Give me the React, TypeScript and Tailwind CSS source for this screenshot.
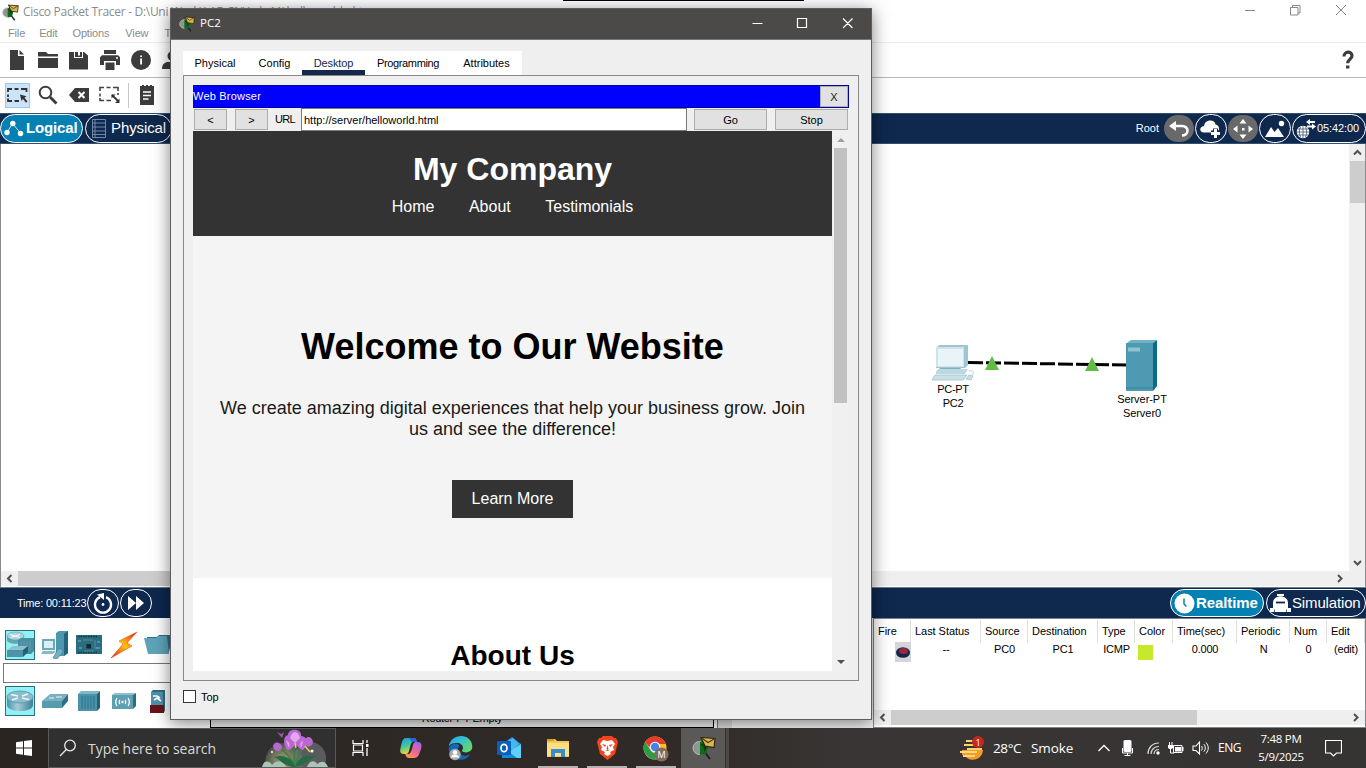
import React from "react";

const UI = "font-['Liberation_Sans',Arial,sans-serif]";
const SEG = "font-['Open_Sans','Noto_Sans',sans-serif]";

function PacketLogo({ size = 18 }: { size?: number }) {
  return (
    <svg width={size} height={size} viewBox="0 0 24 24" className="shrink-0">
      <path d="M12 15l6 8" stroke="#222" strokeWidth="2" />
      <circle cx="7.500" cy="12" r="6.500" fill="#8f958f" stroke="#b9bdb9" strokeWidth="1" />
      <path d="M8 6l5-2 3 7-2 7-6 1z" fill="#0c6a1a" />
      <path d="M9 8l3 2 1 5M12 7l2 6" stroke="#063d0c" strokeWidth="1.300" fill="none" />
      <path d="M9 1.500l14 1-1 9-9-1.500z" fill="#dcb552" stroke="#2b2208" strokeWidth="1.100" />
      <path d="M9 1.500l7 5 7-4" fill="none" stroke="#4a3a10" strokeWidth="1.100" />
    </svg>
  );
}

function Chevron({ dir, color = "#505050" }: { dir: "l" | "r" | "u" | "d"; color?: string }) {
  const d = { l: "M7.5 2L4 5.5L7.5 9", r: "M4 2L7.5 5.5L4 9", u: "M2 7.5L5.5 4L9 7.5", d: "M2 4L5.5 7.5L9 4" }[dir];
  return (
    <svg width="11" height="11" viewBox="0 0 11 11" className="shrink-0">
      <path d={d} fill="none" stroke={color} strokeWidth="2" />
    </svg>
  );
}

function ToolCell({ children }: { children: React.ReactNode }) {
  return <div className="flex h-full w-[31px] shrink-0 items-center justify-center">{children}</div>;
}

function Toolbars() {
  return (
    <>
      <div className="flex h-[35px] shrink-0 items-center border-b border-[#b9b9b9] pl-[1px]">
        <ToolCell>
          <svg width="16" height="20" viewBox="0 0 16 20"><path d="M1 0h8v6h6v14H1z" fill="#3c3c3c" /><path d="M10.500 0L15 4.500h-4.500z" fill="#3c3c3c" /></svg>
        </ToolCell>
        <ToolCell>
          <svg width="20" height="16" viewBox="0 0 20 16"><path d="M0 0h8l2 2h10v2.500H0z" fill="#3c3c3c" /><path d="M0 6h20v10H0z" fill="#3c3c3c" /></svg>
        </ToolCell>
        <ToolCell>
          <svg width="19" height="19" viewBox="0 0 19 19"><path d="M0 1h5v6h9V1h1l4 3.500v14H0z" fill="#3c3c3c" /><path d="M6 1h3v3.500h2V1h2v5H6z" fill="#3c3c3c" /></svg>
        </ToolCell>
        <ToolCell>
          <svg width="20" height="20" viewBox="0 0 20 20"><path d="M4 0h12v4H4zM2 5.200h16l2 2V15h-4v-4H4v4H0V7.200zM5.500 12.500h9V20h-9z" fill="#3c3c3c" /><circle cx="17" cy="8" r="1" fill="#fff" /></svg>
        </ToolCell>
        <ToolCell>
          <svg width="20" height="20" viewBox="0 0 20 20"><circle cx="10" cy="10" r="10" fill="#3c3c3c" /><path d="M9.200 5.500H11v1.600H9.200zM9.200 8.500H11v6H9.200z" fill="#fff" /></svg>
        </ToolCell>
        <ToolCell>
          <svg width="20" height="18" viewBox="0 0 20 18"><circle cx="10" cy="5" r="4.500" fill="#3c3c3c" /><path d="M0 18c0-5 3-7 6-7h8c3 0 6 2 6 7z" fill="#3c3c3c" /></svg>
        </ToolCell>
        <div className="flex-1" />
        <div className="flex w-[36px] justify-center">
          <svg width="12" height="20" viewBox="0 0 12 20"><path d="M2 6.500C2 0.800 10 1 10 5.800c0 3.200-4.300 3.600-4.300 7.500" fill="none" stroke="#3c3c3c" strokeWidth="3.200" /><rect x="4" y="15.500" width="3.400" height="3" fill="#3c3c3c" /></svg>
        </div>
      </div>
      <div className="flex h-[35px] shrink-0 items-center pb-px pl-[1px]">
        <ToolCell>
          <div className="ml-[2px] flex h-[25px] w-[25px] items-center justify-center border border-[#99c9ef] bg-[#cce4f7]">
            <svg width="21" height="17" viewBox="0 0 21 17"><path d="M1 5V2h4M7.500 2h4M14 2h5.500v3M1 7.500v2.500M1 11.500V14h4M7.500 14H12" fill="none" stroke="#333" strokeWidth="1.800" /><path d="M13 7.500l6.500 1.700-2 1.500 3 3.700-1.500 1.300-3-3.700-1.500 2z" fill="#333" /></svg>
          </div>
        </ToolCell>
        <ToolCell>
          <svg width="20" height="20" viewBox="0 0 20 20"><circle cx="7.500" cy="7.500" r="5.800" fill="none" stroke="#3c3c3c" strokeWidth="2" /><path d="M12 12l6.500 6.500" stroke="#3c3c3c" strokeWidth="2.800" /></svg>
        </ToolCell>
        <ToolCell>
          <svg width="20" height="14" viewBox="0 0 20 14"><path d="M6 0h14v14H6L0 7z" fill="#3c3c3c" /><path d="M9.500 4l6 6M15.500 4l-6 6" stroke="#fff" strokeWidth="2" /></svg>
        </ToolCell>
        <ToolCell>
          <svg width="21" height="18" viewBox="0 0 21 18"><path d="M1 5V1.500h4M7.500 1.500h4M14 1.500h5V5M1 7.500v3M1 12v2.500h4M7.500 14.500H12M19 7v2" fill="none" stroke="#444" strokeWidth="1.600" /><path d="M13 9l6.500 6.500" stroke="#333" strokeWidth="1.800" /><path d="M12.500 8.500h4l-4 4zM20.500 17h-4.500l4.500-4.500z" fill="#333" /></svg>
        </ToolCell>
        <div className="ml-[3px] h-[25px] w-px bg-[#c8c8c8]" />
        <div className="ml-[11px]">
          <svg width="14" height="20" viewBox="0 0 14 20"><path d="M0 1h2V0h2v1h2V0h2v1h2V0h2v1h2v19H0z" fill="#3c3c3c" /><path d="M3 7h8M3 10.500h8M3 14h5.500" stroke="#fff" strokeWidth="1.400" /></svg>
        </div>
      </div>
    </>
  );
}

function NavBar() {
  return (
    <div className="flex h-[31px] shrink-0 items-center border-t border-b border-[#34506f] bg-[#0e284e]">
      <div className="flex h-[29px] w-[83px] shrink-0 items-center rounded-full border border-white bg-[#0480b2] pl-[3px] text-white">
        <svg width="20" height="17" viewBox="0 0 20 17"><path d="M3 12.500L8.500 3.500L16.500 13" fill="none" stroke="#cfe8f2" strokeWidth="1" /><circle cx="3" cy="12.500" r="2.700" fill="#fff" /><circle cx="8.800" cy="3.500" r="2.700" fill="#fff" /><circle cx="16.500" cy="13.500" r="2.700" fill="#fff" /></svg>
        <span className="ml-[2px] text-[15px] font-bold tracking-[-0.15px]">Logical</span>
      </div>
      <div className="ml-[2px] flex h-[29px] w-[87px] shrink-0 items-center rounded-full border border-white pl-[6px] text-white">
        <svg width="14" height="19" viewBox="0 0 14 19"><path d="M.5.500h13v18H.5zM.5 4h13M.5 8h13M.5 12h13M.5 15.500h13M3 .5v18" fill="none" stroke="#7088a6" strokeWidth="1" /></svg>
        <span className="ml-[5px] text-[15px] tracking-[-0.1px]">Physical</span>
      </div>
      <div className="flex-1" />
      <span className="mr-[5px] text-[11px] text-white">Root</span>
      <div className="flex items-center gap-px">
        <div className="flex h-[27px] w-[30px] items-center justify-center rounded-full bg-[#696969]">
          <svg width="22" height="18" viewBox="0 0 22 18"><path d="M8 1L1 6l7 5" fill="#fff" /><path d="M6 6h8c7.500 0 7 9.500 0 9.500" fill="none" stroke="#fff" strokeWidth="2.600" /></svg>
        </div>
        <div className="flex h-[29px] w-[32px] items-center justify-center rounded-full border border-white">
          <svg width="22" height="20" viewBox="0 0 22 20"><path d="M4 13.500c-5 0-5-6 0-6.500C5 0 15 0 15.500 5.500c4 .5 5 6 1 8z" fill="#fff" /><path d="M15.500 9.500v9M11 14h9" stroke="#0e284e" strokeWidth="5" /><path d="M15.500 10v9M11 14.500h9" stroke="#fff" strokeWidth="3" /></svg>
        </div>
        <div className="flex h-[27px] w-[30px] items-center justify-center rounded-full bg-[#696969]">
          <svg width="20" height="20" viewBox="0 0 20 20"><path d="M10 0l3.500 4.500h-7zM10 20l3.500-4.500h-7zM0 10l4.500-3.500v7zM20 10l-4.500-3.500v7zM9 9h2.500v2.500H9z" fill="#fff" /></svg>
        </div>
        <div className="flex h-[29px] w-[32px] items-center justify-center rounded-full border border-white">
          <svg width="20" height="18" viewBox="0 0 20 18"><path d="M0 17L6 7l3.500 5L13 8l6 9z" fill="#fff" /><circle cx="16.500" cy="3.500" r="2.700" fill="#fff" /></svg>
        </div>
        <div className="flex h-[29px] w-[74px] items-center rounded-full border border-white pl-[3px] text-[11px] text-white">
          <svg width="21" height="20" viewBox="0 0 21 20"><circle cx="7" cy="13" r="6.200" fill="#fff" /><path d="M1 13h12M7 7v12M2 10h10M2 16h10M4.500 8c-1.500 3-1.500 7 0 10M9.500 8c1.500 3 1.500 7 0 10" fill="none" stroke="#0e284e" strokeWidth=".6" /><path d="M12 3h7M11 7.500h7" stroke="#fff" strokeWidth="2" /><path d="M10 3l4-3v6zM20 7.500l-4-3v6z" fill="#fff" /></svg>
          <span className="tracking-[-0.1px]">05:42:00</span>
        </div>
      </div>
    </div>
  );
}

function Workspace() {
  return (
    <div className="flex h-[443px] shrink-0 flex-col border-x border-[#8a8a8a] bg-white">
      <div className="flex h-[427px]">
        <div className="relative flex-1">
          <svg width="270" height="100" viewBox="0 0 270 100" className="absolute left-[914px] top-[181px]">
            <path d="M53 37.500L212 40" stroke="#000" strokeWidth="3" strokeDasharray="15 3" />
            <path d="M77 31l7 14H70zM177 32l7 14h-14z" fill="#63ba47" />
            <path d="M212 18l4-3h26l-4 3z" fill="#6fb2c4" />
            <path d="M238 18l4-3v46l-4 5z" fill="#0b6c85" />
            <path d="M211 18h27v48h-27z" fill="#4e9ab2" />
            <path d="M211 63h27" stroke="#35809a" strokeWidth="1" />
            <path d="M213 22.500h12v4h-12z" fill="#8fc3d0" />
            <path d="M21 23l3-3h29v20l-3 3H21z" fill="#9ec5d0" />
            <path d="M21 22h28v20H21z" fill="#cfe3e9" />
            <rect x="23" y="24" width="25" height="17" fill="#eaf3f8" />
            <path d="M25 43h20l6 4H21z" fill="#7fb1c0" />
            <path d="M21 47l3-3h29l-3 5H21z" fill="#bcd9e2" />
            <path d="M20 50h32l-4 5H17z" fill="#c9e0e7" stroke="#9dc2cf" strokeWidth=".8" />
            <path d="M51 54l3-4 4 1-2 4z" fill="#c9e0e7" stroke="#9dc2cf" strokeWidth=".8" />
            <path d="M54 46c4-1 6 1 3 4" fill="none" stroke="#b5c6cc" strokeWidth=".8" />
          </svg>
          <div className="absolute left-[912px] top-[238px] w-[80px] text-center text-[11px] leading-[14px] tracking-[-0.3px]">PC-PT<br />PC2</div>
          <div className="absolute left-[1101px] top-[248px] w-[80px] text-center text-[11px] leading-[14px] tracking-[-0.05px]">Server-PT<br />Server0</div>
        </div>
        <div className="flex w-[16px] flex-col items-center bg-[#efefef]">
          <div className="flex h-[17px] items-center"><Chevron dir="u" /></div>
          <div className="h-[42px] w-[15px] bg-[#cdcdcd]" />
          <div className="flex-1" />
          <div className="flex h-[17px] items-center"><Chevron dir="d" /></div>
        </div>
      </div>
      <div className="flex h-[15px] items-center bg-[#efefef]">
        <div className="flex w-[17px] justify-center"><Chevron dir="l" /></div>
        <div className="h-full w-[640px] bg-[#cdcdcd]" />
        <div className="flex-1" />
        <div className="mr-[20px]"><Chevron dir="r" /></div>
      </div>
    </div>
  );
}

function TimeBar() {
  return (
    <div className="flex h-[31px] shrink-0 items-center border-t border-[#6c7a8c] bg-[#0e284e] text-white">
      <span className="ml-[17px] w-[70px] whitespace-nowrap text-[11px] tracking-[-0.2px]">Time: 00:11:23</span>
      <div className="flex h-[28px] w-[32px] items-center justify-center rounded-full border border-white">
        <svg width="20" height="22" viewBox="0 0 20 22"><path d="M7 5.200a8 8 0 1 0 6 0" fill="none" stroke="#fff" strokeWidth="2.400" /><path d="M4 2.500L11 1v7z" fill="#fff" /><circle cx="10" cy="12.500" r="1.400" fill="#fff" /></svg>
      </div>
      <div className="ml-px flex h-[28px] w-[32px] items-center justify-center rounded-full border border-white">
        <svg width="18" height="14" viewBox="0 0 18 14"><path d="M1 0l8 7-8 7zM9 0l8 7-8 7z" fill="#fff" /></svg>
      </div>
      <div className="flex-1" />
      <div className="flex h-[28px] w-[94px] items-center rounded-full border border-white bg-[#0480b2] pl-[3px]">
        <svg width="21" height="21" viewBox="0 0 21 21"><circle cx="10.500" cy="10.500" r="10" fill="#fff" /><path d="M10 5.500V11l2.500 2.500" fill="none" stroke="#0480b2" strokeWidth="1.500" /></svg>
        <span className="ml-px text-[15px] font-bold tracking-[-0.1px]">Realtime</span>
      </div>
      <div className="ml-[2px] flex h-[28px] w-[100px] items-center rounded-full border border-white pl-[3px]">
        <svg width="21" height="18" viewBox="0 0 21 18"><path d="M7 0h7v2h-7zM3 9c0-9 15-9 15 0v3H3zM0 14h21v4H0zM3 12h15v3H3z" fill="#fff" /><path d="M6 8.500h9" stroke="#0e284e" strokeWidth="1.800" /><path d="M4.500 15.500v2.500M16.500 15.500v2.500" stroke="#0e284e" strokeWidth=".7" /></svg>
        <span className="ml-[1px] text-[15px] tracking-[-0.15px]">Simulation</span>
      </div>
    </div>
  );
}

function RouterIcon() {
  return (
    <svg width="28" height="22" viewBox="0 0 28 22"><defs><linearGradient id="rt"><stop stopColor="#4f93a9" /><stop offset=".4" stopColor="#a5cdd8" /><stop offset="1" stopColor="#3c8097" /></linearGradient></defs><path d="M1 7v8c0 8 26 8 26 0V7z" fill="url(#rt)" /><ellipse cx="14" cy="7" rx="13" ry="6" fill="#8dbccc" stroke="#4f90a6" strokeWidth=".7" /><path d="M5 4.500l7 1.500M16 8l7 1.500M22 4l-6 2M12 8l-6 2" stroke="#eafafd" strokeWidth="1.400" /></svg>
  );
}

function SwitchIcon() {
  return (
    <svg width="28" height="16" viewBox="0 0 28 16"><path d="M1 8L9 1h18l-6 7z" fill="#79b1c2" /><path d="M1 8h20v7H1z" fill="#579bb0" /><path d="M21 8l6-7v7l-6 7z" fill="#2b6f85" /><path d="M8 5h5M15 4h6" stroke="#e8f6fa" strokeWidth="1.200" /></svg>
  );
}

function DeviceCell({ children }: { children: React.ReactNode }) {
  return <div className="flex h-[30px] w-[30px] shrink-0 items-center justify-center">{children}</div>;
}

function DevicePanel() {
  return (
    <div className="flex w-[210px] shrink-0 flex-col pl-[3px]">
      <div className="mt-[12px] flex gap-[4.500px] pl-[2px]">
        <div className="flex h-[30px] w-[30px] items-center justify-center border border-[#2c6d7e] bg-[#8ff3f6]">
          <svg width="28" height="28" viewBox="0 0 28 28"><path d="M1 5v4c0 5 17 5 17 0V5z" fill="#67a4b5" /><ellipse cx="9.500" cy="5" rx="8.500" ry="4" fill="#a9d2dc" stroke="#5796a9" strokeWidth=".5" /><path d="M4 3.500l10 3M14 3.500L5 6.500" stroke="#fff" /><path d="M12 9l3-2h13v13l-3 3H12z" fill="#4a8ca2" /><path d="M15 10v12M18 10v12M21 10v12M24 10v10" stroke="#5f9fb2" /><path d="M1 19l6-4h15l-5 4z" fill="#8ec1cf" /><path d="M1 19h16v7H1z" fill="#4f93a9" /><path d="M17 19l5-4v6l-5 5z" fill="#256176" /></svg>
        </div>
        <DeviceCell>
          <svg width="28" height="28" viewBox="0 0 28 28"><path d="M15 2l3-2h9v22l-4 3h-8z" fill="#4d97ae" /><path d="M23 3l4-3v22l-4 3z" fill="#22647b" /><path d="M1 8h13v11H1z" fill="#6aa9bb" /><path d="M3 10h9v7H3z" fill="#d9eef5" /><path d="M2 20h13l-3 3H0z" fill="#86b8c6" /><path d="M12 27l5-9h4l1 3-6 7z" fill="#74b0c1" stroke="#3e869d" strokeWidth=".7" /></svg>
        </DeviceCell>
        <DeviceCell>
          <svg width="26" height="20" viewBox="0 0 26 20"><path d="M0 0h26v19H0z" fill="#2b6d80" /><path d="M10.500 9h4.500v4.500h-4.500z" fill="#17252c" /><path d="M2 1.500h20M2 17.500h19" stroke="#133844" strokeWidth="1.500" strokeDasharray="1.500 1" /><path d="M2 5h3v2H2zM3 12h3v2H3zM21 6h3v2h-3zM20 12h4v2h-4z" fill="#4b95a5" /><path d="M7 5h10M8 16h10M19 5v9" fill="none" stroke="#6aa6ac" strokeWidth=".6" /></svg>
        </DeviceCell>
        <DeviceCell>
          <svg width="28" height="28" viewBox="0 0 28 28"><defs><linearGradient id="bolt" x1="1" y1="0" x2="0" y2="1"><stop offset="0" stopColor="#e31a08" /><stop offset=".5" stopColor="#ffc215" /><stop offset="1" stopColor="#dd1c10" /></linearGradient></defs><path d="M27 1L9 10l4 3L1 27l21-12-5-3z" fill="url(#bolt)" stroke="#e2400c" strokeWidth=".5" /></svg>
        </DeviceCell>
        <DeviceCell>
          <svg width="28" height="22" viewBox="0 0 28 22"><path d="M3 3h10l2-2h11l2 3-3 14H5z" fill="#2b7188" /><path d="M0 4h12l2-2h9l2 18H4z" fill="#5ea4b8" /></svg>
        </DeviceCell>
      </div>
      <div className="mt-[3px] h-[20px] border border-[#777] bg-white" />
      <div className="mt-[3px] flex gap-[4.500px] pl-[2px]">
        <div className="flex h-[30px] w-[30px] items-center justify-center border border-[#2c6d7e] bg-[#8ff3f6]"><RouterIcon /></div>
        <DeviceCell><SwitchIcon /></DeviceCell>
        <DeviceCell>
          <svg width="24" height="22" viewBox="0 0 24 22"><path d="M1 4l3-3h19l-3 3z" fill="#80b7c5" /><path d="M1 4h19v17H1z" fill="#4b91a8" /><path d="M20 4l3-3v17l-3 3z" fill="#235f75" /><path d="M5 6v13M8 6v13M11 6v13M14 6v13M17 6v13" stroke="#2d758c" /></svg>
        </DeviceCell>
        <DeviceCell>
          <svg width="26" height="18" viewBox="0 0 26 18"><path d="M1 3l3-2h21l-3 2z" fill="#8cc0cd" /><path d="M1 3h21v14H1z" fill="#5d9fb3" /><path d="M22 3l3-2v13l-3 3z" fill="#2c6b81" /><path d="M6 6c-2 3-2 5 0 8M9 8c-1 1-1 3 0 4M17 6c2 3 2 5 0 8M14 8c1 1 1 3 0 4" fill="none" stroke="#fff" strokeWidth="1.300" /><circle cx="11.500" cy="10" r="1.200" fill="#fff" /></svg>
        </DeviceCell>
        <DeviceCell>
          <svg width="16" height="25" viewBox="0 0 16 25"><path d="M1 3l2-2h12v21l-2 2H1z" fill="#2d6d83" /><path d="M1 3h12v13H1z" fill="#4f93a9" /><path d="M0 16h14v8H0z" fill="#681418" /><path d="M3 7h4l3 2M4 11l3-2 4 3" stroke="#fff" strokeWidth="1.600" fill="none" /></svg>
        </DeviceCell>
      </div>
    </div>
  );
}

const columns: { head: string; value: string }[] = [
  { head: "Fire", value: "" },
  { head: "Last Status", value: "--" },
  { head: "Source", value: "PC0" },
  { head: "Destination", value: "PC1" },
  { head: "Type", value: "ICMP" },
  { head: "Color", value: "" },
  { head: "Time(sec)", value: "0.000" },
  { head: "Periodic", value: "N" },
  { head: "Num", value: "0" },
  { head: "Edit", value: "(edit)" },
];

function EventTable() {
  return (
    <div className="flex w-[493px] shrink-0 flex-col border border-[#7f8489] bg-white pt-px text-[11px]">
      <div className="grid h-[22px] grid-cols-[37px_70px_47px_70px_37px_38px_64px_53px_37px_38px]">
        {columns.map((c) => (
          <div key={c.head} className="whitespace-nowrap border-r border-[#e0e0e0] pl-[4px] leading-[23px] tracking-[-0.05px]">{c.head}</div>
        ))}
      </div>
      <div className="grid h-[20px] grid-cols-[37px_70px_47px_70px_37px_38px_64px_53px_37px_38px]">
        {columns.map((c) => (
          <div key={c.head} className="whitespace-nowrap text-center leading-[14px] tracking-[-0.2px]">
            {c.head === "Fire" && (
              <div className="flex h-[20px] justify-end">
                <div className="flex w-[16px] items-center justify-center bg-[#d3d5d9]">
                  <svg width="14" height="11" viewBox="0 0 14 11"><ellipse cx="7" cy="5.500" rx="7" ry="5.300" fill="#14254a" /><ellipse cx="7.500" cy="4" rx="4.500" ry="3" fill="#a4243f" /></svg>
                </div>
              </div>
            )}
            {c.head === "Color" && <div className="ml-[3px] mt-[3px] h-[15px] w-[15px] bg-[#c6e92b]" />}
            {c.value}
          </div>
        ))}
      </div>
      <div className="flex-1" />
      <div className="mb-[2px] flex h-[15px] items-center bg-[#efefef]">
        <div className="flex w-[17px] justify-center"><Chevron dir="l" /></div>
        <div className="h-full w-[306px] bg-[#cdcdcd]" />
        <div className="flex-1" />
        <div className="mr-[4px]"><Chevron dir="r" /></div>
      </div>
    </div>
  );
}

function CompanySite() {
  return (
    <div className="w-[639px] overflow-hidden bg-white">
      <div className="flex h-[105px] flex-col items-center bg-[#333] text-white">
        <div className="mt-[20px] text-[32px] font-bold leading-[37px]">My Company</div>
        <div className="mt-[9px] flex gap-[34.500px] text-[16px] leading-[19px]">
          <span>Home</span><span>About</span><span>Testimonials</span>
        </div>
      </div>
      <div className="flex h-[342px] flex-col items-center bg-[#f4f4f4]">
        <div className="mt-[90px] whitespace-nowrap text-[36px] font-bold leading-[42px] text-black">Welcome to Our Website</div>
        <div className="mt-[30px] whitespace-nowrap text-center text-[18px] leading-[21px] text-[#1a1a1a]">
          We create amazing digital experiences that help your business grow. Join<br />us and see the difference!
        </div>
        <div className="mt-[40px] flex h-[38px] w-[121px] items-center justify-center bg-[#333] pb-px text-[16px] text-white">Learn More</div>
      </div>
      <div className="pt-[61px] text-center text-[28px] font-bold leading-[34px] text-black">About Us</div>
    </div>
  );
}

function Dialog() {
  return (
    <div className="absolute left-[170px] top-[8px] flex h-[712px] w-[702px] flex-col border border-[#5d5d61] bg-[#efefef] shadow-[0_3px_16px_rgba(0,0,0,0.5)]">
      <div className={`${SEG} flex h-[31px] shrink-0 items-center border-b border-[#777] bg-[#4c4a48] text-white`}>
        <div className="ml-[8px]"><PacketLogo size={16} /></div>
        <span className="ml-[5px] pb-[2px] text-[11.5px]">PC2</span>
        <div className="flex-1" />
        <svg width="106" height="12" viewBox="0 0 106 12" className="mb-[2px] mr-[15px]"><path d="M2.500 6.500h10M47.500 1.500h9v9h-9zM93 1.500l9.500 9.500M102.500 1.500L93 11" fill="none" stroke="#fff" strokeWidth="1.200" /></svg>
      </div>
      <div className="flex flex-1 flex-col px-[12px] pt-[11px]">
        <div className="flex h-[24px] w-[339px] bg-white text-[11px] leading-[24px]">
          <div className="w-[64px] text-center">Physical</div>
          <div className="w-[55px] text-center">Config</div>
          <div className="w-[63px] border-b-[5px] border-[#14284b] text-center tracking-[-0.1px] text-[#14284b]">Desktop</div>
          <div className="w-[86px] text-center tracking-[-0.35px]">Programming</div>
          <div className="w-[71px] text-center">Attributes</div>
        </div>
        <div className="flex h-[606px] w-[676px] flex-col border border-[#85888c] pl-[9px] pt-[9px]">
          <div className="flex h-[23px] w-[656px] items-center justify-between border border-l-0 border-[#0000a8] bg-[#00f] text-[11px] text-white">
            <span className="tracking-[0.2px]">Web Browser</span>
            <span className="flex h-[21px] w-[28px] items-center justify-center border border-[#adadad] bg-[#e1e1e1] pt-px text-[#222]">X</span>
          </div>
          <div className="flex h-[23px] w-[656px] items-center text-[11px]">
            <span className="ml-px flex h-[21px] w-[33px] items-center justify-center border border-[#adadad] bg-[#e1e1e1] pt-px">&lt;</span>
            <span className="ml-[8px] flex h-[21px] w-[33px] items-center justify-center border border-[#adadad] bg-[#e1e1e1] pt-px">&gt;</span>
            <span className="ml-[7px] w-[26px] tracking-[-0.7px]">URL</span>
            <span className="flex h-[23px] w-[386px] items-center border border-[#7a7a7a] bg-white pl-[2px] pt-px">http://server/helloworld.html</span>
            <span className="ml-[7px] flex h-[21px] w-[73px] items-center justify-center border border-[#adadad] bg-[#e1e1e1] pt-px">Go</span>
            <span className="ml-[8px] flex h-[21px] w-[73px] items-center justify-center border border-[#adadad] bg-[#e1e1e1] pt-px">Stop</span>
          </div>
          <div className="flex h-[540px]">
            <CompanySite />
            <div className="flex w-[17px] flex-col items-center bg-[#f0f0f0]">
              <svg width="8" height="4" viewBox="0 0 8 4" className="my-[6.500px]"><path d="M4 0l4 4H0z" fill="#a0a0a0" /></svg>
              <div className="h-[255px] w-[13px] bg-[#c1c1c1]" />
              <div className="flex-1" />
              <svg width="8" height="4" viewBox="0 0 8 4" className="mb-[7px]"><path d="M4 4l4-4H0z" fill="#505050" /></svg>
            </div>
          </div>
        </div>
        <div className="mt-[9px] flex h-[13px] items-center gap-[5px] text-[11px]">
          <div className="h-[13px] w-[13px] border border-[#333] bg-white" />
          <span className="pt-[2px] leading-[13px]">Top</span>
        </div>
      </div>
    </div>
  );
}

function Flowers() {
  return (
    <svg width="72" height="38" viewBox="0 0 72 38" className="shrink-0">
      <defs><radialGradient id="globe"><stop offset="0" stopColor="#cdbd90" /><stop offset=".7" stopColor="#76805f" /><stop offset="1" stopColor="#50565a" /></radialGradient></defs>
      <circle cx="25" cy="33" r="19" fill="url(#globe)" opacity=".8" />
      <circle cx="51" cy="29" r="16" fill="#74787b" opacity=".6" />
      <path d="M3 38c2-8 8-6 10-2 6-7 12-2 14 2zM48 38c3-8 9-6 10-3 6-4 9-2 11 3z" fill="#a9c5b8" />
      <path d="M35 38C36 25 35 20 35 12M36 36C27 22 24 22 20 18M37 37c2-16 8-19 12-22" stroke="#407e48" strokeWidth="1.800" fill="none" />
      <path d="M15 28c10-3 18 1 21 10-10 0-14-7-21-10zM36 38c3-9 9-12 21-11-7 3-12 10-21 11z" fill="#246b46" />
      <path d="M29 6c0-7 14-7 13 1 9 1 6 10 2 14-4-1-5-4-8-5-3 3-4 5-8 5-4-6-4-14 1-15z" fill="#bd67d7" />
      <path d="M31 9c2-8 8-8 10 0l-5 5zM27 12c3 0 4 3 3 7M44 12c-3 1-3 4-2 7" fill="#e2a8ee" />
      <path d="M14 17c2-6 8-3 9 1-1 6-8 5-9-1zM45 12c3-7 9-4 9 2-2 5-7 5-9-2z" fill="#b769cd" />
      <path d="M18 3l4 2 3-2-2 6z" fill="#9b5aa8" />
      <path d="M36 14l1 5M46 17l5 6" stroke="#f3c94a" strokeWidth="1.500" />
      <circle cx="53" cy="22" r="1.500" fill="#fff" /><circle cx="13" cy="23" r="1.200" fill="#e5c8ed" />
    </svg>
  );
}

function AppSlot({ children, open }: { children: React.ReactNode; open?: boolean }) {
  return (
    <div className="flex h-full w-[49px] shrink-0 flex-col items-center">
      <div className="flex h-[38px] items-center">{children}</div>
      {open && <div className="h-[2px] w-[40px] bg-[#b9b1b0]" />}
    </div>
  );
}

function Taskbar() {
  return (
    <div className={`${SEG} flex h-[40px] shrink-0 items-center bg-[linear-gradient(90deg,#2a2521,#302b28_50%,#383534_62%,#363433)] text-white`}>
      <div className="flex w-[48px] justify-center">
        <svg width="16" height="16" viewBox="0 0 16 16"><path d="M0 2.200L7 1.300V7.600H0zM8 1.100L16 0v7.600H8zM0 8.500h7v6.200L0 13.800zM8 8.500h8V16L8 14.900z" fill="#fff" /></svg>
      </div>
      <div className="flex h-[40px] w-[288px] shrink-0 items-center border border-[#5b5858] bg-[#313030]">
        <svg width="18" height="18" viewBox="0 0 18 18" className="ml-[10px]"><circle cx="11" cy="6.500" r="5.300" fill="none" stroke="#e8e8e8" strokeWidth="1.300" /><path d="M7.300 10.500L1 17" stroke="#e8e8e8" strokeWidth="1.300" /></svg>
        <span className="ml-[11px] w-[171px] whitespace-nowrap text-[14px] tracking-[-0.04px] text-[#dadada]">Type here to search</span>
        <Flowers />
      </div>
      <div className="flex h-[40px] items-center">
        <AppSlot>
          <svg width="17" height="16" viewBox="0 0 17 16" className="mr-px mt-px"><path d="M1 0v3.500h10V0M1 16v-3.500h10V16M1.500 5h9v6h-9z" fill="none" stroke="#fff" strokeWidth="1.200" /><path d="M15 0v3M15 8v8" stroke="#fff" strokeWidth="1.300" /><path d="M14 4h2.500v3H14z" fill="#fff" /></svg>
        </AppSlot>
        <div className="ml-[1.500px] flex h-full">
          <AppSlot>
            <svg width="24" height="22" viewBox="0 0 24 22" className="mt-[2px]"><defs><linearGradient id="cpa" x1="0" y1="0" x2="0.300" y2="1"><stop stopColor="#1b9dea" /><stop offset=".55" stopColor="#3fc7a0" /><stop offset="1" stopColor="#f1d42f" /></linearGradient><linearGradient id="cpb" x1="0.800" y1="0" x2="0.200" y2="1"><stop stopColor="#a067ec" /><stop offset=".5" stopColor="#e9649a" /><stop offset="1" stopColor="#ff9a4c" /></linearGradient></defs><path d="M7 1h8c2 0 2 2 3 4h-4c-2 0-2 2-3 5l-1 4c-1 3-2 3-5 3-5 0-4-4-3-8 1-5 2-8 5-8z" fill="url(#cpa)" /><path d="M18 5c5 0 5 3 4 7-2 6-3 9-7 9H10c-3 0-3-3-4-4h3c2 0 3-2 4-5l1-4c1-3 2-3 4-3z" fill="url(#cpb)" /><path d="M10 1h5c2 0 2 2 3 4h-4c-2 0-2-2-4-4z" fill="#2866d4" /></svg>
          </AppSlot>
          <AppSlot>
            <svg width="25" height="25" viewBox="0 0 25 25" className="mt-[2px]"><defs><linearGradient id="edg" x1="0" y1="0" x2="1" y2=".6"><stop stopColor="#2aa5e0" /><stop offset=".5" stopColor="#37bfd0" /><stop offset="1" stopColor="#63d66a" /></linearGradient></defs><path d="M.8 11C2-3 24-4 24.300 11c0 5-7 7-10.500 4 3-4 0-8-5-8-4 0-7 1-8 4z" fill="url(#edg)" /><path d="M.8 12C3 7 10 6 11.500 10c-2 2-2 5 0 7 3 4 8 3 11 1-4 7-14 8-19 1-2-2-3-4-2.700-7z" fill="#1568b8" /><circle cx="7" cy="18.500" r="5.800" fill="#a6abb0" /><circle cx="7" cy="16.500" r="2.200" fill="#fff" /><path d="M3 21.500c0-4 8-4 8 0z" fill="#fff" /></svg>
          </AppSlot>
          <AppSlot>
            <svg width="25" height="24" viewBox="0 0 25 24" className="mt-[2px]"><path d="M5 8l10-7 9 7v14H5z" fill="#1490df" /><path d="M7 7l9-5 6 6-7 6z" fill="#49b7ee" /><path d="M5 22l11-9 8-5v14z" fill="#5fd0f8" /><path d="M5 11l15 11H5z" fill="#138ad5" /><rect x="0" y="5" width="14" height="14" rx="1" fill="#0760b9" /><ellipse cx="7" cy="12" rx="3" ry="3.700" fill="none" stroke="#fff" strokeWidth="1.700" /></svg>
          </AppSlot>
          <AppSlot open>
            <svg width="22" height="20" viewBox="0 0 22 20" className="mt-[2px]"><path d="M0 1h8l2 2h12v16H0z" fill="#f6c84f" /><path d="M0 1h7v2H0z" fill="#d99d24" /><path d="M0 5h22v13H0z" fill="#ffe084" /><path d="M4 19v-8h14v8h-4v-4H8v4z" fill="#398bd0" /></svg>
          </AppSlot>
          <AppSlot open>
            <svg width="21" height="24" viewBox="0 0 21 24" className="mt-[2px]"><path d="M6 0h9l2 2h2l2 4-3 12-7.500 6L3 18 0 6l2-4h2z" fill="#f4441c" /><path d="M6 4l4.500 1L15 4l3 4-2 3 1 3-4 2 1 2-3.500 2L7 18l1-2-4-2 1-3-2-3z" fill="#fff" /><path d="M5 8l4 1-1 2zM16 8l-4 1 1 2zM10.500 9l1 4-1 1-1-1zM8 15l2.500-1 2.500 1" fill="#f4441c" /></svg>
          </AppSlot>
          <AppSlot open>
            <svg width="26" height="26" viewBox="0 0 26 26" className="mt-[4px]"><circle cx="12" cy="12" r="11.500" fill="#fbc116" /><path d="M2 6C7-2 19-1 23 8H12c-4 0-5 5-2 7L2 6z" fill="#e43c31" /><path d="M2 6C-2 13 3 23 12 23.500l4-7c-4 2-8 0-9-3z" fill="#299a4f" /><circle cx="12" cy="11" r="5.300" fill="#fff" /><circle cx="12" cy="11" r="4.200" fill="#4184ed" /><circle cx="18.500" cy="18.500" r="7" fill="#846a61" /><text x="18.500" y="22" textAnchor="middle" fontSize="9" fill="#fff">M</text></svg>
          </AppSlot>
        </div>
      </div>
      <div className="flex h-[40px] w-[44px] items-center justify-center bg-[#5b5958] pl-[3px]"><PacketLogo size={24} /></div>
      <div className="h-[40px] w-[4px] border-l border-[#343230] bg-[#4b4847]" />
      <div className="flex-1" />
      <svg width="25" height="24" viewBox="0 0 25 24"><path d="M2 14h21c-1 12-16 12-18 5H2z" fill="#f39c27" /><path d="M6 5h9M4 9h11M7 13h15" stroke="#ffd16b" strokeWidth="2" /><path d="M0 16h17M3 20h12" stroke="#ffd783" strokeWidth="2" /><circle cx="18" cy="6" r="6" fill="#c52720" /><text x="18" y="9.500" textAnchor="middle" fontSize="9" fill="#fff">1</text></svg>
      <span className="ml-[8px] w-[38px] whitespace-nowrap text-[13.5px] tracking-[-0.4px]">28°C</span>
      <span className="w-[67px] text-[13.5px] tracking-[-0.1px]">Smoke</span>
      <svg width="12" height="8" viewBox="0 0 12 8"><path d="M.5 7L6 1.500 11.500 7" fill="none" stroke="#fff" strokeWidth="1.300" /></svg>
      <svg width="11" height="16" viewBox="0 0 11 16" className="ml-[12px]"><rect x="1.500" y="0" width="8" height="12" rx="1.500" fill="#fff" /><path d="M.5 8v5h10V8M5.500 13v2M2.500 15.500h6" stroke="#fff" fill="none" strokeWidth="1" /></svg>
      <svg width="13" height="13" viewBox="0 0 13 13" className="ml-[14px]"><path d="M1 12C1 6 5 1 12 1M4 12c0-4 3-7.500 8-7.500M7 12c0-2.500 2-4.500 5-4.500" fill="none" stroke="#d8d8d8" strokeWidth="1.200" /><circle cx="11" cy="11" r="1.700" fill="#fff" /></svg>
      <svg width="16" height="13" viewBox="0 0 16 13" className="ml-[8px]"><path d="M5.500 3.500h8.500v7H5.500z" fill="none" stroke="#fff" strokeWidth="1" /><path d="M7 5h6v4.500H7zM14 5h1.500v4H14zM0 3h5v3l-1.500 1h-2L0 6zM1 0h1v3H1zM3.500 0h1v3h-1z" fill="#fff" /><path d="M2.500 6v5H6" stroke="#fff" fill="none" /></svg>
      <svg width="17" height="14" viewBox="0 0 17 14" className="ml-[8px]"><path d="M1 5h3l3.500-4v12L4 9.500H1z" fill="none" stroke="#fff" strokeWidth="1.100" /><path d="M9.500 5c1 1 1 3 0 4.500M11.800 3.200c2 2 2 5.500 0 7.500M14 1.500c3 3.500 3 7.500 0 11" fill="none" stroke="#fff" /></svg>
      <span className="ml-[9px] w-[26px] text-[12px] tracking-[-0.5px]">ENG</span>
      <div className="ml-[11px] w-[52px] whitespace-nowrap text-center text-[11.5px] leading-[18px] tracking-[-0.3px]">7:48 PM<br />5/9/2025</div>
      <svg width="17" height="17" viewBox="0 0 17 17" className="ml-[18px] mr-[24px]"><path d="M.5.500h16v12.500h-5L8.500 16l-3-3h-5z" fill="none" stroke="#fff" strokeWidth="1.200" /></svg>
    </div>
  );
}

export default function App() {
  return (
    <div className={`${UI} relative flex h-[768px] w-[1366px] flex-col overflow-hidden bg-white text-black`}>
      <div className={`${SEG} flex h-[24px] shrink-0 items-center text-[#8b8b8b]`}>
        <div className="ml-[2px]"><PacketLogo size={17} /></div>
        <span className="ml-[4px] w-[540px] truncate text-[12px] tracking-[-0.3px]">Cisco Packet Tracer - D:\Uni Work\LAB CN\Lab 11\helloworld.pkt</span>
        <div className="h-[24px] w-[241px] border-t border-black" />
        <div className="flex-1" />
        <svg width="104" height="12" viewBox="0 0 104 12" className="mb-[4px] mr-[19px]"><path d="M2 6.500h10M47.500 3.500h7.500v7.500h-7.500zM49.500 3.500v-2h7.500V9h-2M93 1l10 10M103 1L93 11" fill="none" stroke="#888" strokeWidth="1" /></svg>
      </div>
      <div className="flex h-[19px] shrink-0 items-center gap-[16px] border-b border-[#ececec] pl-[8px] text-[11px] tracking-[-0.15px] text-[#8b8b8b]">
        <span className="-mr-[2px]">File</span><span className="-mr-px">Edit</span><span>Options</span><span>View</span><span>Tools</span>
      </div>
      <Toolbars />
      <NavBar />
      <Workspace />
      <TimeBar />
      <div className="flex h-[110px] shrink-0">
        <DevicePanel />
        <div className="flex h-[110px] w-[504px] flex-col justify-end border border-black bg-[#efefef] text-center text-[11px] tracking-[-0.3px]">
          <div className="h-[16px] leading-[15px]">Router-PT-Empty</div>
        </div>
        <div className="ml-[3px] h-full w-[15px] border-l border-[#777] bg-[#dedede]" />
        <div className="flex-1 bg-[#f4f4f4]" />
        <EventTable />
      </div>
      <Dialog />
      <div className="relative"><Taskbar /></div>
    </div>
  );
}
